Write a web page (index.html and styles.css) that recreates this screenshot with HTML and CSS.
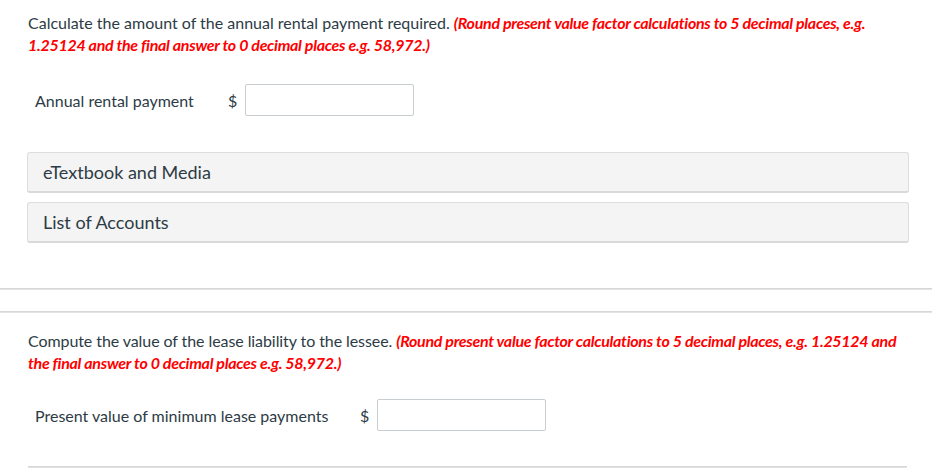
FILE: index.html
```html
<!DOCTYPE html>
<html>
<head>
<meta charset="utf-8">
<link rel="stylesheet" href="styles.css">
</head>
<body>
<div class="page">
  <section class="part">
    <p class="question">Calculate the amount of the annual rental payment required. <em class="hint">(Round present value factor calculations to 5 decimal places, e.g. 1.25124 and the final answer to 0 decimal places e.g. 58,972.)</em></p>
    <div class="answer-row">
      <span class="label label-1">Annual rental payment</span>
      <span class="currency">$</span>
      <span class="input"></span>
    </div>
    <div class="panels">
      <div class="panel">eTextbook and Media</div>
      <div class="panel">List of Accounts</div>
    </div>
  </section>
  <hr class="rule rule-a">
  <hr class="rule rule-b">
  <section class="part part-2">
    <p class="question">Compute the value of the lease liability to the lessee. <em class="hint">(Round present value factor calculations to 5 decimal places, e.g. 1.25124 and the final answer to 0 decimal places e.g. 58,972.)</em></p>
    <div class="answer-row">
      <span class="label label-2">Present value of minimum lease payments</span>
      <span class="currency">$</span>
      <span class="input"></span>
    </div>
    <hr class="rule-bottom">
  </section>
</div>
</body>
</html>
```
FILE: styles.css
```css
* { box-sizing: border-box; }
html, body { margin: 0; padding: 0; background: #fff; }
body {
  font-family: Lato, "Open Sans", "Liberation Sans", sans-serif;
  color: #2d3b45;
  font-size: 16px;
  overflow: hidden;
}
.page { width: 932px; }
.part { padding: 0 24px 0 28px; }
.question {
  margin: 0;
  padding-top: 12px;
  line-height: 22px;
  font-size: 16px;
}
.hint {
  color: #f00;
  font-weight: bold;
  font-style: italic;
  letter-spacing: -0.3px;
}
.answer-row {
  display: flex;
  align-items: center;
  margin-top: 28px;
  padding-left: 7px;
  height: 32px;
}
.label { font-size: 16px; }
.label-1 { width: 193px; }
.label-2 { width: 325px; }
.currency { width: 17px; font-size: 16px; }
.input {
  width: 169px;
  height: 32px;
  border: 1px solid #c7cdd1;
  border-radius: 2px;
  background: #fff;
}
.panels {
  margin-top: 36px;
  margin-left: -1px;
  display: flex;
  flex-direction: column;
  gap: 9px;
}
.panel {
  width: 882px;
  height: 41px;
  background: #f4f4f4;
  border: 1px solid #ddd;
  border-bottom: 2px solid #d9d9d9;
  border-radius: 3px;
  padding-left: 15px;
  display: flex;
  align-items: center;
  font-size: 18px;
}
.rule {
  margin: 0;
  border: 0;
  height: 2px;
  background: #e3e3e3;
  border-top: 1px solid #d7d7d7;
}
.rule-a { margin-top: 45px; }
.rule-b { margin-top: 21px; }
.part-2 .question { padding-top: 17px; letter-spacing: -0.08px; }
.part-2 .hint { letter-spacing: -0.3px; }
.part-2 .answer-row { margin-top: 25px; }
.rule-bottom {
  margin: 35px 0 0 0;
  border: 0;
  height: 2px;
  width: 879px;
  background: #e3e3e3;
  border-top: 1px solid #d7d7d7;
}
```
